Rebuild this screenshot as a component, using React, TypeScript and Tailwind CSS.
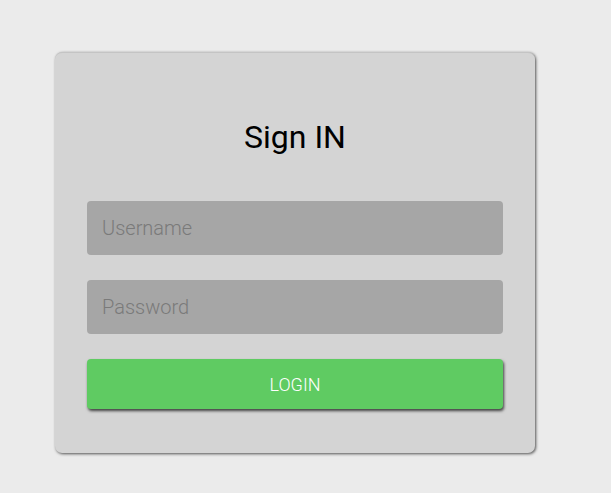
import React from "react";

export default function App() {
  return (
    <div className="min-h-[493px] w-full bg-[#ebebeb] pl-[55px] pt-[52px]" style={{ fontFamily: "Roboto, 'Noto Sans', sans-serif" }}>
      <div className="w-[480px] h-[401px] rounded-[7px] bg-[#d4d4d4] border-t border-[#c4c4c4] shadow-[1px_1px_3px_rgba(0,0,0,0.65)] px-[32px] pt-[65px]">
        <h1 className="text-center text-[32px] leading-[38px] text-black font-normal">Sign IN</h1>
        <div className="mt-[45px] flex flex-col gap-[25px]">
          <input
            className="h-[54px] w-full rounded-[4px] bg-[#a6a6a6] pl-[15px] text-[20px] font-light text-[#333] outline-none placeholder:text-[#7a7a7a]"
            placeholder="Username"
          />
          <input
            type="password"
            className="h-[54px] w-full rounded-[4px] bg-[#a6a6a6] pl-[15px] text-[20px] font-light text-[#333] outline-none placeholder:text-[#7a7a7a]"
            placeholder="Password"
          />
          <button className="h-[50px] w-full rounded-[4px] bg-[#5fcb62] text-[18px] font-light text-white shadow-[1px_2px_3px_rgba(0,0,0,0.7)]">
            LOGIN
          </button>
        </div>
      </div>
    </div>
  );
}
